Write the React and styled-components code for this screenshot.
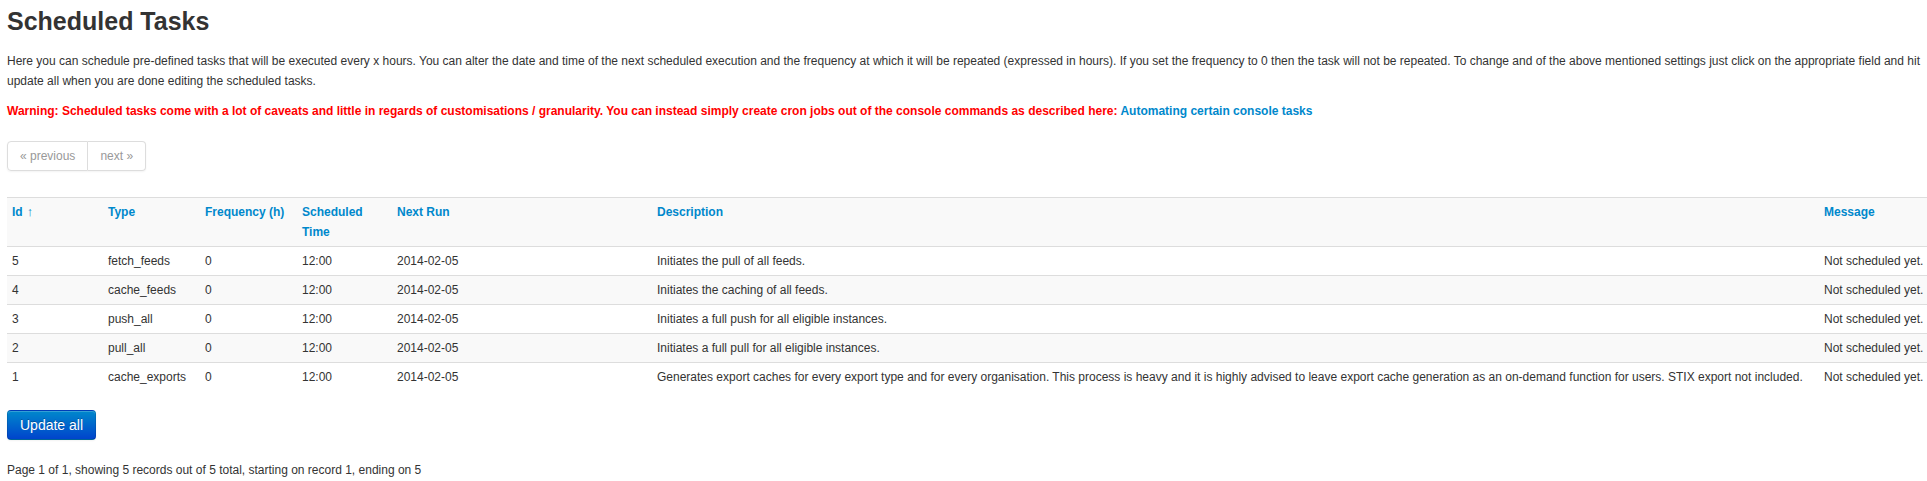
import React from "react";
import styled, { createGlobalStyle } from "styled-components";

const GlobalStyle = createGlobalStyle`
  html, body {
    margin: 0;
    padding: 0;
    overflow: hidden;
    background: #ffffff;
  }
  body {
    font-family: "Liberation Sans", Arial, Helvetica, sans-serif;
    font-size: 12px;
    line-height: 20px;
    color: #333333;
  }
`;

const Page = styled.div`
  padding: 1px 7px 0 7px;
`;

const Title = styled.h2`
  margin: 0 0 10px 0;
  font-size: 25px;
  line-height: 40px;
  font-weight: bold;
  color: #333333;
`;

const Paragraph = styled.p`
  margin: 0 0 10px 0;
  color: ${(p) => (p.$warning ? "#ff0000" : "#333333")};
  font-weight: ${(p) => (p.$warning ? "bold" : "normal")};
`;

const Link = styled.a`
  color: #0088cc;
  text-decoration: none;
  font-weight: bold;
`;

const Pager = styled.ul`
  display: flex;
  width: max-content;
  list-style: none;
  padding: 0;
  margin: 20px 0 26px 0;
  border-radius: 4px;
  box-shadow: 0 1px 2px rgba(0, 0, 0, 0.05);
`;

const PagerItem = styled.li`
  display: block;
  padding: 4px 12px;
  line-height: 20px;
  color: #999999;
  background: #ffffff;
  border: 1px solid #dddddd;
  border-left-width: ${(p) => (p.$first ? "1px" : "0")};
  border-radius: ${(p) => (p.$first ? "4px 0 0 4px" : "0 4px 4px 0")};
`;

const Table = styled.table`
  table-layout: fixed;
  border-collapse: collapse;
  border-spacing: 0;
  width: 1932px;
  margin: 0 0 19px 0;
`;

const HeadCell = styled.th`
  text-align: left;
  vertical-align: top;
  padding: 4px 5px;
  line-height: 20px;
  font-weight: bold;
  background: #f9f9f9;
  border-top: 1px solid #dddddd;
`;

const SortLink = styled.a`
  color: #0088cc;
  text-decoration: none;
`;

const SortArrow = styled.span`
  font-weight: normal;
  font-size: 13px;
  margin-left: 4px;
`;

const Row = styled.tr`
  background: ${(p) => (p.$shaded ? "#f9f9f9" : "#ffffff")};
`;

const Cell = styled.td`
  padding: 4px 5px;
  line-height: 20px;
  vertical-align: top;
  border-top: 1px solid #dddddd;
  white-space: nowrap;
  overflow: hidden;
`;

const PrimaryButton = styled.button`
  display: block;
  font-family: "Liberation Sans", Arial, Helvetica, sans-serif;
  font-size: 14px;
  line-height: 20px;
  padding: 4px 12px;
  margin: 0 0 20px 0;
  color: #ffffff;
  text-shadow: 0 -1px 0 rgba(0, 0, 0, 0.25);
  background-color: #006dcc;
  background-image: linear-gradient(to bottom, #0088cc, #0044cc);
  border: 1px solid;
  border-color: rgba(0, 0, 0, 0.1) rgba(0, 0, 0, 0.1) rgba(0, 0, 0, 0.25);
  border-radius: 4px;
  box-shadow: inset 0 1px 0 rgba(255, 255, 255, 0.2), 0 1px 2px rgba(0, 0, 0, 0.05);
  cursor: pointer;
`;

const Counter = styled.p`
  margin: 0;
`;

const columns = [
  { label: "Id", width: 96, sorted: true },
  { label: "Type", width: 97 },
  { label: "Frequency (h)", width: 97 },
  { label: "Scheduled Time", width: 95 },
  { label: "Next Run", width: 260 },
  { label: "Description", width: 1167 },
  { label: "Message", width: 120 },
];

const tasks = [
  { id: 5, type: "fetch_feeds", desc: "Initiates the pull of all feeds." },
  { id: 4, type: "cache_feeds", desc: "Initiates the caching of all feeds." },
  { id: 3, type: "push_all", desc: "Initiates a full push for all eligible instances." },
  { id: 2, type: "pull_all", desc: "Initiates a full pull for all eligible instances." },
  {
    id: 1,
    type: "cache_exports",
    desc:
      "Generates export caches for every export type and for every organisation. This process is heavy and it is highly advised to leave export cache generation as an on-demand function for users. STIX export not included.",
  },
];

export default function App() {
  return (
    <>
      <GlobalStyle />
      <Page>
        <Title>Scheduled Tasks</Title>
        <Paragraph>
          Here you can schedule pre-defined tasks that will be executed every x hours. You can alter the date and time of
          the next scheduled execution and the frequency at which it will be repeated (expressed in hours). If you set the
          frequency to 0 then the task will not be repeated. To change and of the above mentioned settings just click on
          the appropriate field and hit update all when you are done editing the scheduled tasks.
        </Paragraph>
        <Paragraph $warning>
          Warning: Scheduled tasks come with a lot of caveats and little in regards of customisations / granularity. You
          can instead simply create cron jobs out of the console commands as described here:{" "}
          <Link href="#">Automating certain console tasks</Link>
        </Paragraph>
        <Pager>
          <PagerItem $first>« previous</PagerItem>
          <PagerItem>next »</PagerItem>
        </Pager>
        <Table>
          <colgroup>
            {columns.map((c) => (
              <col key={c.label} style={{ width: c.width }} />
            ))}
          </colgroup>
          <thead>
            <tr>
              {columns.map((c) => (
                <HeadCell key={c.label}>
                  <SortLink href="#">
                    {c.label}
                    {c.sorted && <SortArrow>↑</SortArrow>}
                  </SortLink>
                </HeadCell>
              ))}
            </tr>
          </thead>
          <tbody>
            {tasks.map((t, i) => (
              <Row key={t.id} $shaded={i % 2 === 1}>
                <Cell>{t.id}</Cell>
                <Cell>{t.type}</Cell>
                <Cell>0</Cell>
                <Cell>12:00</Cell>
                <Cell>2014-02-05</Cell>
                <Cell>{t.desc}</Cell>
                <Cell>Not scheduled yet.</Cell>
              </Row>
            ))}
          </tbody>
        </Table>
        <PrimaryButton>Update all</PrimaryButton>
        <Counter>Page 1 of 1, showing 5 records out of 5 total, starting on record 1, ending on 5</Counter>
      </Page>
    </>
  );
}
